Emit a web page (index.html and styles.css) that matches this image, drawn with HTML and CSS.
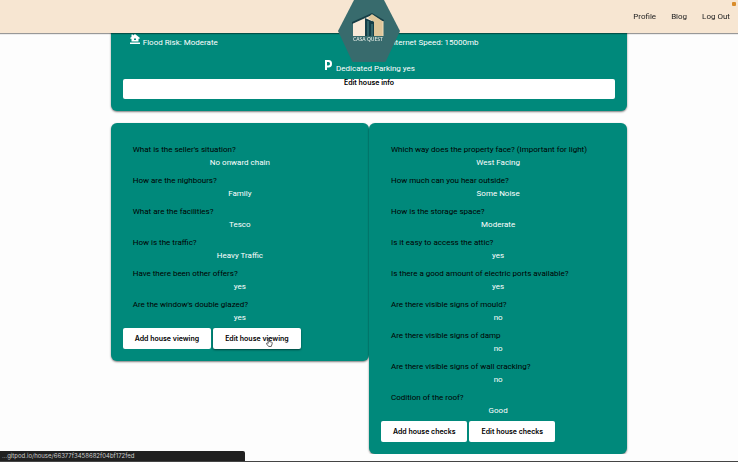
FILE: index.html
```html
<!DOCTYPE html>
<html lang="en">
<head>
<meta charset="utf-8">
<title>Casa Quest</title>
<link rel="stylesheet" href="styles.css">
</head>
<body>
<header class="navbar">
  <a class="brand" href="#" aria-label="Casa Quest">
    <svg viewBox="0 0 62 62" class="logo">
      <path d="M16 0H46L62 31L47.500 62H14.500L0 31Z" fill="#386b6d"/>
      <path d="M15 23L34 14V22L27 19V36H15Z" fill="#f8ead8"/>
      <path d="M14 24V22L34 13V15Z" fill="#173f47"/>
      <path d="M34 14L45 21V36H36V22L30 18Z" fill="#dfc79b"/>
      <path d="M34 14V13L46 20V22Z" fill="#173f47"/>
      <path d="M27 18L36 22V36H27Z" fill="#143e48"/>
      <path d="M30 21V36M34 24V36" stroke="#4f8b8b" stroke-width="1"/>
      <path d="M45 21V36" stroke="#f3dfba" stroke-width="1"/>
      <text x="30" y="41" class="logo-text">CASA QUEST</text>
    </svg>
  </a>
  <nav class="links">
    <a href="#">Profile</a>
    <a href="#">Blog</a>
    <a href="#">Log Out</a>
  </nav>
  <span class="indicator"></span>
</header>
<main class="page">
  <section class="card info">
    <div class="facts">
      <p class="fact">
        <svg class="icon" viewBox="0 0 20 20" fill="#fff"><path fill-rule="evenodd" d="M10 0L20 8L18 10L17 9V15H3V9L2 10L0 8L3 6V1H6V3ZM8 9V12H12V9Z"/><path d="M0 16H20V17H0ZM0 18H20V20H0Z"/></svg>
        <span>Flood Risk: Moderate</span>
      </p>
      <p class="fact">
        <svg class="icon" viewBox="0 0 20 20" fill="none" stroke="#fff" stroke-width="2"><path d="M1 8Q10 0 19 8M5 12Q10 8 15 12M9 16H11"/></svg>
        <span>Internet Speed: 15000mb</span>
      </p>
    </div>
    <p class="fact parking">
      <svg class="icon" viewBox="0 0 20 20"><path d="M6 20V2H11Q16 2 16 7.500T11 13H6" fill="none" stroke="#fff" stroke-width="4"/></svg>
      <span>Dedicated Parking yes</span>
    </p>
    <button class="wide-button" type="button">Edit house info</button>
  </section>
  <div class="columns">
    <section class="card">
      <dl class="answers">
        <dt>What is the seller's situation?</dt><dd>No onward chain</dd>
        <dt>How are the nighbours?</dt><dd>Family</dd>
        <dt>What are the facilities?</dt><dd>Tesco</dd>
        <dt>How is the traffic?</dt><dd>Heavy Traffic</dd>
        <dt>Have there been other offers?</dt><dd>yes</dd>
        <dt>Are the window's double glazed?</dt><dd>yes</dd>
      </dl>
      <div class="actions">
        <button type="button">Add house viewing</button>
        <button type="button" class="hovered">Edit house viewing
          <svg class="pointer" viewBox="0 0 16 20"><path d="M5 12V2Q5 1 6 1T7.500 2V8L13 9Q15 10 14 13L12 19H6L1 13Q1 11 3 11Z" fill="#fff" stroke="#111" stroke-width="1.500"/></svg>
        </button>
      </div>
    </section>
    <section class="card">
      <dl class="answers">
        <dt>Which way does the property face? (Important for light)</dt><dd>West Facing</dd>
        <dt>How much can you hear outside?</dt><dd>Some Noise</dd>
        <dt>How is the storage space?</dt><dd>Moderate</dd>
        <dt>Is it easy to access the attic?</dt><dd>yes</dd>
        <dt>Is there a good amount of electric ports available?</dt><dd>yes</dd>
        <dt>Are there visible signs of mould?</dt><dd>no</dd>
        <dt>Are there visible signs of damp</dt><dd>no</dd>
        <dt>Are there visible signs of wall cracking?</dt><dd>no</dd>
        <dt>Codition of the roof?</dt><dd>Good</dd>
      </dl>
      <div class="actions">
        <button type="button">Add house checks</button>
        <button type="button">Edit house checks</button>
      </div>
    </section>
  </div>
</main>
<footer class="statusbar"><span class="status">...gitpod.io/house/66377f3458682f04bf172fed</span></footer>
</body>
</html>
```
FILE: styles.css
```css
* { box-sizing: border-box; }

body {
  margin: 0;
  background: #fdfdfd;
  font: 8px/12px Roboto, "Liberation Sans", sans-serif;
  color: #000;
  overflow: hidden;
}

p, dl, dd { margin: 0; }

.navbar {
  position: fixed;
  inset: 0 0 auto;
  z-index: 2;
  height: 33px;
  display: flex;
  align-items: center;
  justify-content: flex-end;
  padding: 0 8px;
  background: #f7e6d2;
  box-shadow: 0 1px 1px rgba(0, 0, 0, 0.4);
}

.brand {
  position: absolute;
  top: 0;
  left: 50%;
  margin-left: -31px;
}

.logo { display: block; width: 62px; height: 62px; }

.logo-text {
  font: 600 5px "Open Sans", sans-serif;
  text-anchor: middle;
  fill: #dfe8e2;
}

.links { display: flex; gap: 15px; }
.links a { color: #222; text-decoration: none; }

.indicator {
  position: absolute;
  top: 2px;
  right: 2px;
  width: 4px;
  height: 4px;
  border-radius: 1px;
  background: #d98c2b;
}

.page {
  width: 70%;
  margin: 0 auto;
  padding-top: 21px;
}

.card {
  padding: 12px;
  border-radius: 6px;
  background: #00897b;
  box-shadow: 0 1px 2px rgba(0, 0, 0, 0.5);
}

.facts { display: grid; grid-template-columns: 1fr 1fr; }

.fact {
  display: flex;
  align-items: flex-end;
  gap: 3px;
  height: 16px;
  padding-left: 7px;
  color: #fff;
}

.icon { width: 10px; height: 10px; margin-bottom: 5px; }

.parking {
  justify-content: center;
  height: 26px;
  padding: 0;
}

button {
  border: 0;
  border-radius: 2px;
  background: #fff;
  color: #000;
  font: 600 7px/8px Inter, "Liberation Sans", sans-serif;
}

.wide-button {
  display: block;
  width: 100%;
  height: 20px;
  margin-top: 4px;
  padding: 0 0 12px;
}

.columns {
  display: grid;
  grid-template-columns: 1fr 1fr;
  align-items: start;
  margin-top: 12px;
}

.answers { padding: 2px 10px 0; }

.answers dt,
.answers dd {
  display: flex;
  align-items: flex-end;
}

.answers dt { height: 18px; }

.answers dd {
  justify-content: center;
  height: 13px;
  color: #fff;
}

.answers { padding-top: 3px; }

.actions { display: flex; gap: 2px; margin-top: 4px; }

.actions button {
  position: relative;
  height: 21px;
  padding: 0 12px;
}

.hovered { box-shadow: 0 1px 2px rgba(0, 0, 0, 0.5); }

.pointer {
  position: absolute;
  right: 28px;
  bottom: 2px;
  width: 7px;
  height: 9px;
}

.statusbar {
  position: fixed;
  inset: auto 0 0;
  z-index: 3;
  display: flex;
  border-bottom: 1px solid #444;
}

.status {
  width: 245px;
  padding-left: 2px;
  border-top-right-radius: 2px;
  background: #202020;
  color: #ccc;
  font: 6px/10px Inter, "Liberation Sans", sans-serif;
}
```
